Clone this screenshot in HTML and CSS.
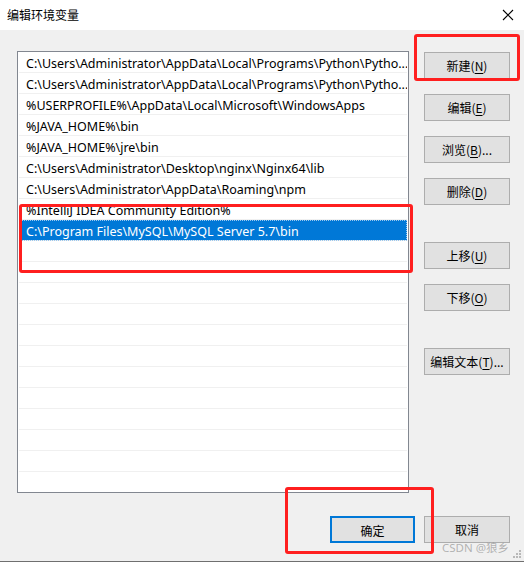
FILE: index.html
```html
<!DOCTYPE html>
<html>
<head>
<meta charset="utf-8">
<link rel="stylesheet" href="styles.css">
</head>
<body>
<div class="window">
  <div class="titlebar">
    <span class="title">编辑环境变量</span>
    <svg class="close" width="12" height="12" viewBox="0 0 12 12"><path d="M1 1 L11 11 M11 1 L1 11" stroke="#000" stroke-width="1.1" fill="none"/></svg>
  </div>
  <div class="content">
    <div class="list">
      <div class="row">C:\Users\Administrator\AppData\Local\Programs\Python\Pytho...</div>
      <div class="row">C:\Users\Administrator\AppData\Local\Programs\Python\Pytho...</div>
      <div class="row">%USERPROFILE%\AppData\Local\Microsoft\WindowsApps</div>
      <div class="row">%JAVA_HOME%\bin</div>
      <div class="row">%JAVA_HOME%\jre\bin</div>
      <div class="row">C:\Users\Administrator\Desktop\nginx\Nginx64\lib</div>
      <div class="row">C:\Users\Administrator\AppData\Roaming\npm</div>
      <div class="row">%IntelliJ IDEA Community Edition%</div>
      <div class="row selected">C:\Program Files\MySQL\MySQL Server 5.7\bin</div>
      <div class="row"></div>
      <div class="row"></div>
      <div class="row"></div>
      <div class="row"></div>
      <div class="row"></div>
      <div class="row"></div>
      <div class="row"></div>
      <div class="row"></div>
      <div class="row"></div>
      <div class="row"></div>
      <div class="row"></div>
      <div class="row last"></div>
    </div>
    <div class="buttons">
      <button class="btn">新建(<u>N</u>)</button>
      <button class="btn">编辑(<u>E</u>)</button>
      <button class="btn">浏览(<u>B</u>)...</button>
      <button class="btn">删除(<u>D</u>)</button>
      <button class="btn gap">上移(<u>U</u>)</button>
      <button class="btn">下移(<u>O</u>)</button>
      <button class="btn gap2">编辑文本(<u>T</u>)...</button>
    </div>
  </div>
  <div class="footer">
    <button class="btn default">确定</button>
    <button class="btn">取消</button>
  </div>
  <div class="mark mark1"></div>
  <div class="mark mark2"></div>
  <div class="mark mark3"></div>
  <div class="watermark">CSDN @狼乡</div>
  <svg class="grip" width="8" height="8" viewBox="0 0 8 8">
    <rect x="6" y="0" width="2" height="2" fill="#b8b8b8"/>
    <rect x="3" y="3" width="2" height="2" fill="#b8b8b8"/>
    <rect x="6" y="3" width="2" height="2" fill="#b8b8b8"/>
    <rect x="0" y="6" width="2" height="2" fill="#b8b8b8"/>
    <rect x="3" y="6" width="2" height="2" fill="#b8b8b8"/>
    <rect x="6" y="6" width="2" height="2" fill="#b8b8b8"/>
  </svg>
</div>
</body>
</html>
```
FILE: styles.css
```css
* { box-sizing: border-box; }
html, body { margin: 0; padding: 0; }
body {
  width: 524px;
  height: 562px;
  overflow: hidden;
  font-family: "Noto Sans", "Noto Sans CJK SC", sans-serif;
  font-size: 12px;
  color: #000;
}
.window {
  position: relative;
  width: 524px;
  height: 562px;
  background: #f0f0f0;
  border-bottom: 1px solid #6f6f6f;
}
.titlebar {
  height: 30px;
  background: #fff;
  display: flex;
  align-items: center;
  justify-content: space-between;
  padding: 0 10px 0 7px;
}
.title {
  font-family: "Noto Sans CJK SC", sans-serif;
  font-size: 12px;
  line-height: 14px;
}
.close { display: block; }
.content {
  display: flex;
  padding: 21px 0 0 17px;
  gap: 15px;
}
.list {
  width: 392px;
  height: 442px;
  background: #fff;
  border: 1px solid #828790;
  padding: 0 1px;
  overflow: hidden;
}
.row {
  height: 21px;
  line-height: 23px;
  border-bottom: 1px solid #f0f0f0;
  padding-left: 7px;
  white-space: nowrap;
  overflow: hidden;
  font-size: 12.5px;
}
.row.selected {
  background: #0078d7;
  color: #fff;
  margin: 0 0 0 2px;
  padding-left: 5px;
  outline: 1px dotted #9cc8ee;
  outline-offset: -1px;
}
.buttons {
  display: flex;
  flex-direction: column;
  padding-top: 1px;
  gap: 15px;
}
.btn {
  width: 86px;
  height: 27px;
  background: #e1e1e1;
  border: 1px solid #adadad;
  font-family: "Noto Sans CJK SC", sans-serif;
  font-size: 12px;
  color: #000;
  padding: 0;
  margin: 0;
  line-height: 25px;
}
.btn u { text-underline-offset: 2px; }
.btn.gap { margin-top: 22px; }
.btn.gap2 { margin-top: 22px; }
.footer {
  display: flex;
  justify-content: flex-end;
  gap: 9px;
  padding: 23px 14px 0 0;
}
.btn.default {
  border: 2px solid #0078d7;
  width: 85px;
}
.mark {
  position: absolute;
  border: 3px solid #ff1f1f;
  border-radius: 3px;
}
.mark1 { left: 414px; top: 34px; width: 106px; height: 47px; }
.mark2 { left: 19px; top: 204px; width: 394px; height: 69px; }
.mark3 { left: 285px; top: 487px; width: 149px; height: 67px; }
.watermark {
  position: absolute;
  left: 442px;
  top: 539px;
  font-family: "Noto Sans", "Noto Sans CJK SC", sans-serif;
  font-size: 11.5px;
  color: rgba(150,150,150,0.7);
}
.grip { position: absolute; right: 3px; bottom: 3px; }
```
